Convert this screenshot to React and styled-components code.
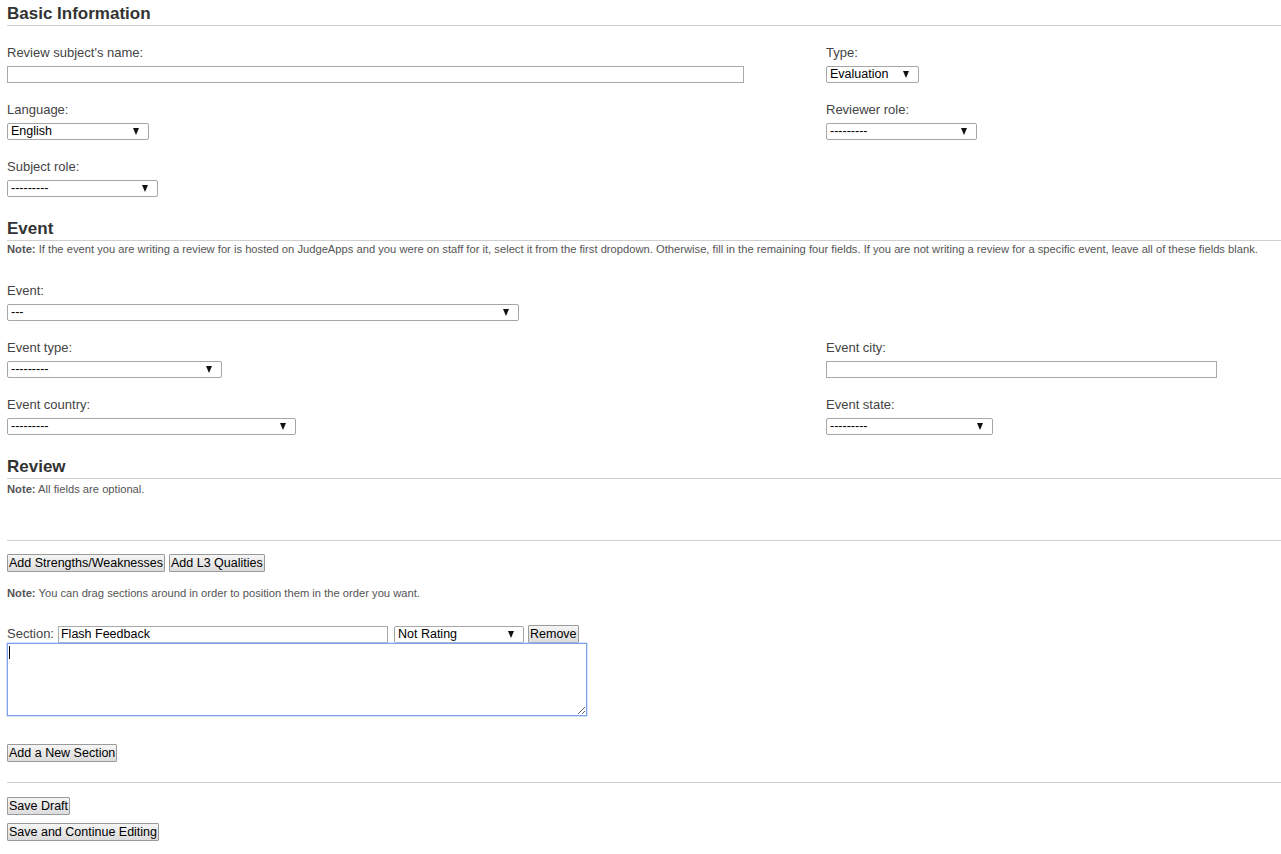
import React from "react";
import styled, { createGlobalStyle } from "styled-components";

const GlobalStyle = createGlobalStyle`
  html, body { margin: 0; padding: 0; background: #fff; }
  body { font-family: "Liberation Sans", Arial, sans-serif; }
  * { box-sizing: border-box; }
`;

const ctrlFont = `"Liberation Sans", Arial, sans-serif`;

const Page = styled.div`
  padding: 0 0 20px 7px;
  color: #444;
`;

const SectionHeading = styled.h2`
  margin: ${(p) => p.$top}px 0 0 0;
  font-size: 17px;
  line-height: 20px;
  font-weight: bold;
  color: #333;
  padding-bottom: 1px;
  border-bottom: 1px solid #cfcfcf;
`;

const Note = styled.p`
  margin: ${(p) => p.$top}px 0 0 0;
  font-size: 11.2px;
  line-height: 14px;
  color: #555;
  b { font-weight: bold; }
`;

const FieldGrid = styled.div`
  margin-top: ${(p) => p.$top}px;
  display: grid;
  grid-template-columns: 819px 1fr;
  row-gap: 19px;
`;

const Field = styled.div`
  display: flex;
  flex-direction: column;
  align-items: flex-start;
  gap: 5px;
  grid-column: ${(p) => (p.$col ? p.$col : "auto")};
`;

const Label = styled.label`
  font-size: 13px;
  line-height: 16px;
  color: #444;
`;

const TextInput = styled.input`
  width: ${(p) => p.$w}px;
  height: 17px;
  margin: 0;
  border: 1px solid #a9a9a9;
  padding: 0 2px;
  font-family: ${ctrlFont};
  font-size: 12.5px;
  line-height: 15px;
  color: #000;
  background: #fff;
  outline: none;
`;

const SelectWrap = styled.span`
  position: relative;
  display: inline-flex;
  width: ${(p) => p.$w}px;
  height: 17px;
`;

const SelectBox = styled.select`
  appearance: none;
  -webkit-appearance: none;
  width: 100%;
  height: 17px;
  border: 1px solid #a6a6a6;
  border-radius: 2px;
  padding: 0 18px 0 3px;
  margin: 0;
  font-family: ${ctrlFont};
  font-size: 12.5px;
  line-height: 15px;
  color: #000;
  background: #fff;
  outline: none;
`;

const Arrow = styled.span`
  position: absolute;
  right: 10px;
  top: 5px;
  width: 0;
  height: 0;
  border-left: 3.5px solid transparent;
  border-right: 3.5px solid transparent;
  border-top: 7px solid #111;
  pointer-events: none;
`;

const Select = ({ w, value, options }) => (
  <SelectWrap $w={w}>
    <SelectBox defaultValue={value}>
      {(options || [value]).map((o) => (
        <option key={o} value={o}>
          {o}
        </option>
      ))}
    </SelectBox>
    <Arrow />
  </SelectWrap>
);

const Divider = styled.hr`
  margin: ${(p) => p.$top}px 0 0 0;
  border: 0;
  border-top: 1px solid #cfcfcf;
  height: 0;
`;

const ButtonRow = styled.div`
  margin-top: ${(p) => p.$top}px;
  display: flex;
  align-items: center;
  gap: 4px;
`;

const Button = styled.button`
  height: 18px;
  padding: 0 1px;
  margin: 0;
  border: 1px solid #9a9a9a;
  border-radius: 1px;
  background: linear-gradient(#f5f5f5, #dcdcdc);
  font-family: ${ctrlFont};
  font-size: 12.5px;
  line-height: 15px;
  color: #000;
  cursor: pointer;
  white-space: nowrap;
`;

const SectionRow = styled.div`
  margin-top: ${(p) => p.$top}px;
  display: flex;
  align-items: center;
  height: 18px;
`;

const SectionLabel = styled.span`
  font-size: 13px;
  line-height: 16px;
  color: #444;
  margin-right: 4px;
`;

const Gap = styled.span`
  display: inline-block;
  width: ${(p) => p.$w}px;
`;

const EditorWrap = styled.div`
  position: relative;
  width: 580px;
`;

const TextArea = styled.textarea`
  display: block;
  width: 580px;
  height: 73px;
  margin: 0;
  border: 1px solid #7ea3e6;
  box-shadow: 0 0 0 0.5px #a9c2ef;
  padding: 2px;
  font-family: ${ctrlFont};
  font-size: 12.5px;
  outline: none;
  resize: both;
  caret-color: transparent;
`;

const Caret = styled.span`
  position: absolute;
  left: 2px;
  top: 3px;
  width: 1px;
  height: 13px;
  background: #000;
  pointer-events: none;
`;

export default function App() {
  const dashes = "---------";
  return (
    <Page>
      <GlobalStyle />
      <SectionHeading $top={4}>Basic Information</SectionHeading>
      <FieldGrid $top={19}>
        <Field>
          <Label>Review subject's name:</Label>
          <TextInput $w={737} type="text" />
        </Field>
        <Field>
          <Label>Type:</Label>
          <Select w={93} value="Evaluation" />
        </Field>
        <Field>
          <Label>Language:</Label>
          <Select w={142} value="English" />
        </Field>
        <Field>
          <Label>Reviewer role:</Label>
          <Select w={151} value={dashes} />
        </Field>
        <Field>
          <Label>Subject role:</Label>
          <Select w={151} value={dashes} />
        </Field>
      </FieldGrid>

      <SectionHeading $top={22}>Event</SectionHeading>
      <Note $top={1}>
        <b>Note:</b> If the event you are writing a review for is hosted on JudgeApps and you were on staff for it,
        select it from the first dropdown. Otherwise, fill in the remaining four fields. If you are not writing a
        review for a specific event, leave all of these fields blank.
      </Note>
      <FieldGrid $top={27}>
        <Field $col="1 / 2">
          <Label>Event:</Label>
          <Select w={512} value="---" />
        </Field>
        <Field $col="1 / 2">
          <Label>Event type:</Label>
          <Select w={215} value={dashes} />
        </Field>
        <Field>
          <Label>Event city:</Label>
          <TextInput $w={391} type="text" />
        </Field>
        <Field>
          <Label>Event country:</Label>
          <Select w={289} value={dashes} />
        </Field>
        <Field>
          <Label>Event state:</Label>
          <Select w={167} value={dashes} />
        </Field>
      </FieldGrid>

      <SectionHeading $top={22}>Review</SectionHeading>
      <Note $top={3}>
        <b>Note:</b> All fields are optional.
      </Note>
      <Divider $top={44} />
      <ButtonRow $top={13}>
        <Button>Add Strengths/Weaknesses</Button>
        <Button>Add L3 Qualities</Button>
      </ButtonRow>
      <Note $top={14}>
        <b>Note:</b> You can drag sections around in order to position them in the order you want.
      </Note>
      <SectionRow $top={25}>
        <SectionLabel>Section:</SectionLabel>
        <TextInput $w={330} type="text" defaultValue="Flash Feedback" />
        <Gap $w={6} />
        <Select w={130} value="Not Rating" />
        <Gap $w={4} />
        <Button>Remove</Button>
      </SectionRow>
      <EditorWrap>
        <TextArea autoFocus />
        <Caret />
      </EditorWrap>
      <ButtonRow $top={28}>
        <Button>Add a New Section</Button>
      </ButtonRow>
      <Divider $top={20} />
      <ButtonRow $top={14}>
        <Button>Save Draft</Button>
      </ButtonRow>
      <ButtonRow $top={8}>
        <Button>Save and Continue Editing</Button>
      </ButtonRow>
    </Page>
  );
}
